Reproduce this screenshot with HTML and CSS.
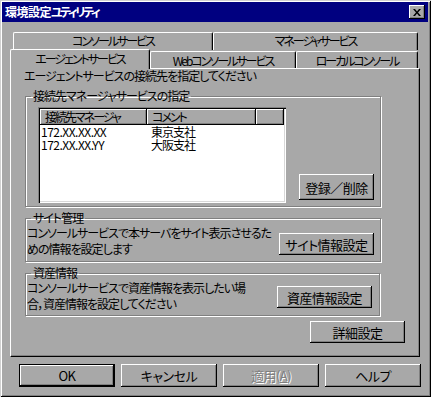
FILE: index.html
```html
<!DOCTYPE html>
<html lang="ja">
<head>
<meta charset="UTF-8">
<meta name="viewport" content="width=device-width, initial-scale=1.0">
<title>環境設定ユティリティ</title>
<link rel="stylesheet" href="styles.css">
</head>
<body>
<div class="window">
    <div class="titlebar">
        <span class="title">環境設定<span class="title-kana">ユティリティ</span></span>
        <button class="btn-close" title="閉じる">
            <svg width="8" height="7" viewBox="0 0 8 7"><path d="M0 0h2l2 2.4 2-2.4h2l-3 3.5 3 3.5h-2l-2-2.4-2 2.4h-2l3-3.5z" fill="#000"/></svg>
        </button>
    </div>

    <div class="tabs">
        <div class="tab-row back">
            <div class="tab t-console">コンソールサービス</div>
            <div class="tab t-manager">マネージャサービス</div>
        </div>
        <div class="tab-row front">
            <div class="tab t-agent active">エージェントサービス</div>
            <div class="tab t-web">Webコンソールサービス</div>
            <div class="tab t-local">ローカルコンソール</div>
        </div>
    </div>

    <div class="panel">
        <p class="desc">エージェントサービスの接続先を指定してください</p>

        <fieldset class="group g-manager">
            <legend>接続先マネージャサービスの指定</legend>
            <div class="group-body">
                <div class="listview">
                    <div class="lv-header">
                        <div class="lv-col c1">接続先マネージャ</div>
                        <div class="lv-col c2">コメント</div>
                        <div class="lv-col c3"></div>
                    </div>
                    <div class="lv-row"><span class="c1">172.XX.XX.XX</span><span class="c2">東京支社</span></div>
                    <div class="lv-row"><span class="c1">172.XX.XX.YY</span><span class="c2">大阪支社</span></div>
                </div>
                <button class="btn btn-regist">登録／削除</button>
            </div>
        </fieldset>

        <fieldset class="group g-site">
            <legend>サイト管理</legend>
            <div class="group-body">
                <p class="group-text">コンソールサービスで本サーバをサイト表示させるた<br>めの情報を設定します</p>
                <button class="btn btn-side">サイト情報設定</button>
            </div>
        </fieldset>

        <fieldset class="group g-asset">
            <legend>資産情報</legend>
            <div class="group-body">
                <p class="group-text">コンソールサービスで資産情報を表示したい場<br>合，資産情報を設定してください</p>
                <button class="btn btn-side">資産情報設定</button>
            </div>
        </fieldset>

        <button class="btn btn-detail">詳細設定</button>
    </div>

    <div class="actions">
        <button class="btn btn-action btn-ok">OK</button>
        <button class="btn btn-action">キャンセル</button>
        <button class="btn btn-action" disabled>適用(<u>A</u>)</button>
        <button class="btn btn-action">ヘルプ</button>
    </div>
</div>
</body>
</html>
```

FILE: styles.css
```css
* {
    box-sizing: border-box;
}
body {
    margin: 0;
    font-family: "Noto Sans CJK JP", sans-serif;
    font-size: 12px;
    font-feature-settings: "palt";
    letter-spacing: -1px;
    color: #000;
    background-color: #a8a8a8;
}
.window {
    width: 431px;
    height: 397px;
    padding: 2px 3px 3px 2px;
    display: flex;
    flex-direction: column;
    background-color: #a8a8a8;
    box-shadow: inset 1px 1px #d0d0d0, inset -1px -1px #000, inset 2px 2px #fff, inset -2px -2px #808080;
}
.titlebar {
    height: 20px;
    display: flex;
    align-items: center;
    justify-content: space-between;
    padding: 0 3px 0 3px;
    background-color: #000080;
}
.title {
    color: #fff;
    font-weight: bold;
    line-height: 20px;
    letter-spacing: -0.5px;
}
.title-kana {
    letter-spacing: -2.5px;
}
.btn-close {
    width: 16px;
    height: 14px;
    padding: 0;
    border: none;
    display: flex;
    align-items: center;
    justify-content: center;
    background-color: #a8a8a8;
    box-shadow: inset -1px -1px #000, inset 1px 1px #fff, inset -2px -2px #808080;
}

/* tabs */
.tabs {
    width: 408px;
    margin: 10px 0 0 8px;
}
.tab-row {
    display: flex;
}
.back {
    height: 18px;
    padding-left: 3px;
}
.front {
    height: 19px;
    margin-top: -1px;
    align-items: flex-end;
}
.tab {
    height: 18px;
    line-height: 16px;
    text-align: center;
    white-space: nowrap;
    letter-spacing: -2px;
    background-color: #a8a8a8;
    border-top: 1px solid #fff;
    border-left: 1px solid #fff;
    border-right: 1px solid #000;
    border-radius: 2px 2px 0 0;
    box-shadow: inset -1px 0 #808080;
}
.front .tab {
    height: 17px;
    line-height: 17px;
}
.front .tab.active {
    height: 20px;
    line-height: 17px;
    margin-bottom: -1px;
    position: relative;
    z-index: 1;
}
.t-console { width: 200px; }
.t-manager { width: 205px; }
.t-agent { width: 140px; }
.t-web { width: 146px; }
.t-local { width: 122px; }

/* panel */
.panel {
    width: 410px;
    height: 289px;
    margin-left: 8px;
    display: flex;
    flex-direction: column;
    border: 1px solid;
    border-color: #fff #000 #000 #fff;
    box-shadow: inset -1px -1px #808080;
}
.desc {
    margin: 0 0 0 13px;
    line-height: 14px;
}
.group {
    min-width: 0;
    width: 356px;
    margin: 4px 0 0 14px;
    padding: 0;
    border: 1px solid #808080;
    box-shadow: 1px 1px #fff, inset 1px 1px #fff;
}
.group legend {
    margin-left: 5px;
    padding: 0 2px;
    line-height: 14px;
}
.group-body {
    display: flex;
}
.group-text {
    flex: 1;
    margin: 0;
    line-height: 16px;
    white-space: nowrap;
}
.g-manager {
    margin-top: 6px;
}
.g-manager .group-body {
    align-items: flex-end;
    padding: 4px 0 3px 12px;
}
.g-site .group-body {
    align-items: flex-start;
    padding: 0 0 4px 1px;
}
.g-site .btn-side {
    margin: 8px 6px 0 0;
}
.g-asset {
    width: 355px;
}
.g-asset .group-body {
    align-items: flex-start;
    padding: 0 0 3px 1px;
}
.g-asset .btn-side {
    margin: 6px 7px 0 0;
}

/* list view */
.listview {
    width: 248px;
    height: 96px;
    padding: 2px;
    display: flex;
    flex-direction: column;
    background-color: #fff;
    box-shadow: inset 1px 1px #808080, inset 2px 2px #000, inset -1px -1px #fff, inset -2px -2px #d8d8d8;
}
.lv-header {
    display: flex;
    height: 16px;
}
.lv-col {
    line-height: 16px;
    padding-left: 5px;
    white-space: nowrap;
    letter-spacing: -2px;
    background-color: #a8a8a8;
    box-shadow: inset -1px -1px #000, inset 1px 1px #fff, inset -2px -2px #808080;
}
.lv-col.c1 { width: 107px; }
.lv-col.c2 { width: 109px; }
.lv-col.c3 { flex: 1; }
.lv-row {
    display: flex;
    line-height: 13px;
    white-space: nowrap;
}
.lv-row .c1 {
    width: 107px;
    padding-left: 1px;
    letter-spacing: -0.5px;
}
.lv-row .c2 {
    padding-left: 4px;
}

/* buttons */
.btn {
    font: inherit;
    font-size: 13px;
    letter-spacing: -0.5px;
    color: #000;
    padding: 0;
    border: none;
    white-space: nowrap;
    background-color: #a8a8a8;
    box-shadow: inset -1px -1px #000, inset 1px 1px #fff, inset -2px -2px #808080;
}
.btn-regist {
    width: 75px;
    height: 26px;
    margin: 0 0 3px 13px;
}
.btn-side {
    width: 95px;
    height: 22px;
}
.btn-detail {
    width: 95px;
    height: 22px;
    margin: 5px 14px 0 0;
    align-self: flex-end;
}
.actions {
    display: flex;
    gap: 6px;
    margin: 7px 0 0 17px;
}
.btn-action {
    width: 96px;
    height: 23px;
}
.btn-ok {
    box-shadow: inset 0 0 0 1px #000, inset -2px -2px #000, inset 2px 2px #fff, inset -3px -3px #808080;
}
.btn:disabled {
    color: #808080;
    text-shadow: 1px 1px #fff;
}
```
